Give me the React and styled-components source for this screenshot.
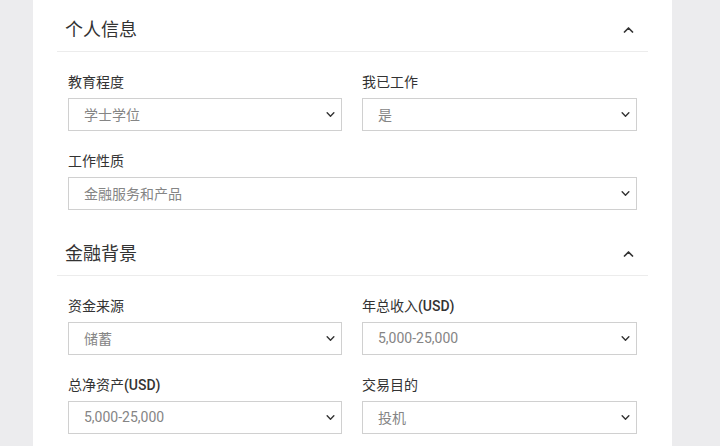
import React from "react";
import styled, { createGlobalStyle } from "styled-components";

const Global = createGlobalStyle`
  html, body { margin: 0; padding: 0; background: #ececee; }
  body { font-family: Roboto, "Noto Sans CJK SC", sans-serif; overflow: hidden; }
`;

const Page = styled.div`
  height: 446px;
  display: flex;
`;

const Panel = styled.div`
  margin-left: 33px;
  width: 639px;
  height: 446px;
  background: #ffffff;
  overflow: hidden;
`;

const Header = styled.div`
  display: flex;
  align-items: center;
  justify-content: space-between;
  height: 42px;
  margin: ${(p) => (p.$first ? "9px" : "23px")} 24px 0;
  padding: 0 14px 0 8px;
  border-bottom: 1px solid #ececec;
`;

const Title = styled.h2`
  margin: 0;
  font-size: 18px;
  font-weight: 400;
  color: #333333;
  line-height: 24px;
`;

const Grid = styled.div`
  display: grid;
  grid-template-columns: 274px 275px;
  column-gap: 20px;
  row-gap: 21px;
  padding: 21px 35px 0;
`;

const Field = styled.div`
  display: flex;
  flex-direction: column;
  grid-column: ${(p) => (p.$full ? "1 / -1" : "auto")};
`;

const Label = styled.label`
  font-size: 14px;
  line-height: 18px;
  color: #333333;
  margin-bottom: 7px;
  b { font-weight: 500; }
`;

const SelectBox = styled.div`
  box-sizing: border-box;
  height: 33px;
  display: flex;
  align-items: center;
  justify-content: space-between;
  padding: 0 6px 1px 15px;
  border: 1px solid #d0d0d0;
  background: #fff;
  font-size: 14px;
  color: #858585;
`;

const Chevron = ({ up, w = 9, h = 5 }) => (
  <svg width={w} height={h} viewBox="0 0 10 6" fill="none">
    <path
      d={up ? "M1 5 L5 1 L9 5" : "M1 1 L5 5 L9 1"}
      stroke="#333"
      strokeWidth="1.7"
      strokeLinecap="round"
      strokeLinejoin="round"
    />
  </svg>
);

const Select = ({ value }) => (
  <SelectBox>
    <span>{value}</span>
    <Chevron />
  </SelectBox>
);

export default function App() {
  return (
    <Page>
      <Global />
      <Panel>
        <Header $first>
          <Title>个人信息</Title>
          <Chevron up w={11} h={6} />
        </Header>
        <Grid>
          <Field>
            <Label>教育程度</Label>
            <Select value="学士学位" />
          </Field>
          <Field>
            <Label>我已工作</Label>
            <Select value="是" />
          </Field>
          <Field $full>
            <Label>工作性质</Label>
            <Select value="金融服务和产品" />
          </Field>
        </Grid>
        <Header>
          <Title>金融背景</Title>
          <Chevron up w={11} h={6} />
        </Header>
        <Grid>
          <Field>
            <Label>资金来源</Label>
            <Select value="储蓄" />
          </Field>
          <Field>
            <Label>
              年总收入<b>(USD)</b>
            </Label>
            <Select value="5,000-25,000" />
          </Field>
          <Field>
            <Label>
              总净资产<b>(USD)</b>
            </Label>
            <Select value="5,000-25,000" />
          </Field>
          <Field>
            <Label>交易目的</Label>
            <Select value="投机" />
          </Field>
        </Grid>
      </Panel>
    </Page>
  );
}
